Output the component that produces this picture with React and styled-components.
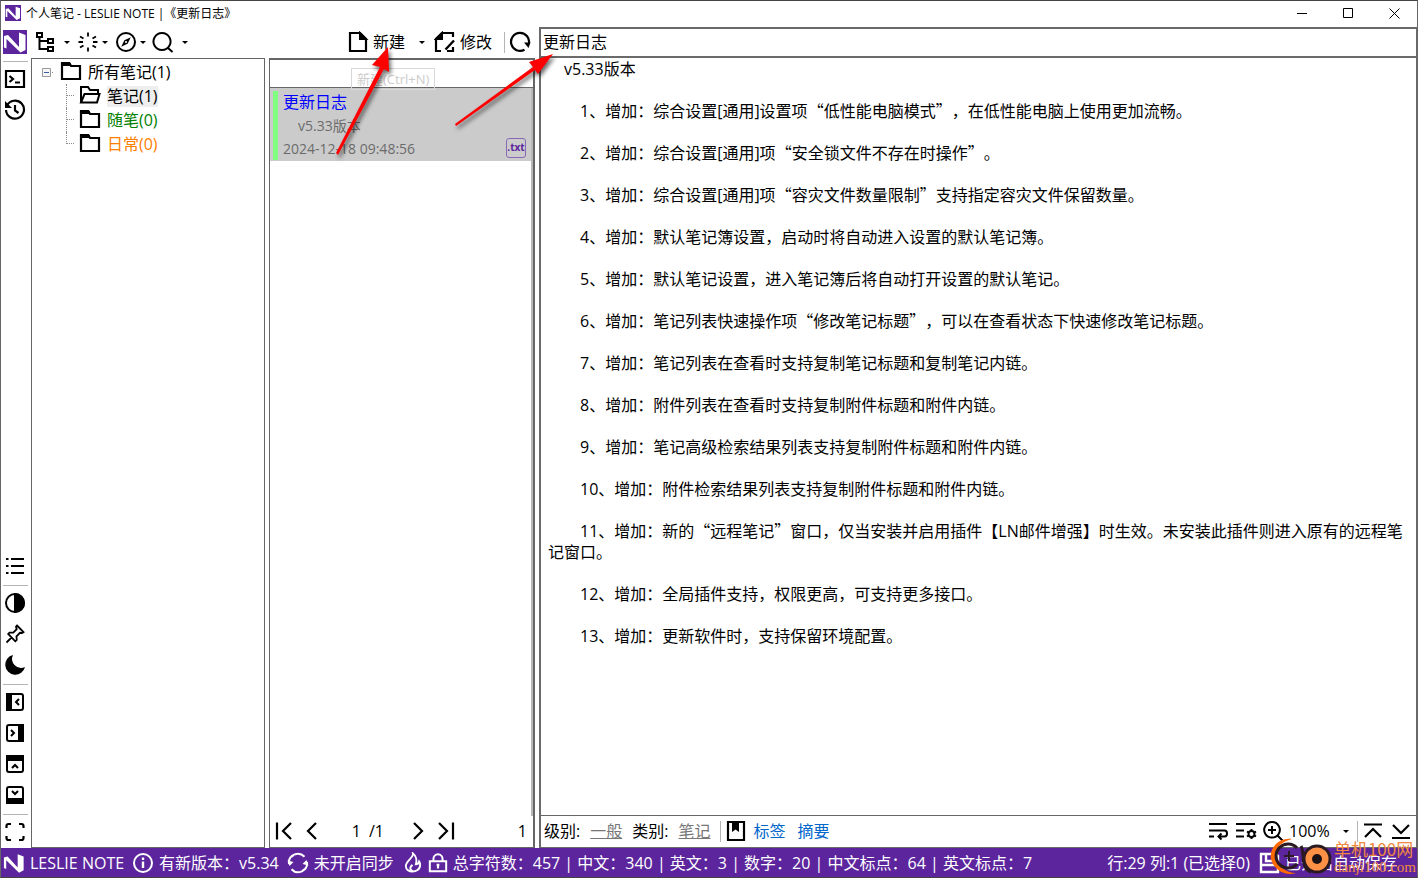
import { styled, createGlobalStyle } from "styled-components";

const GlobalStyle = createGlobalStyle`
  * {
    box-sizing: border-box;
  }
  body {
    margin: 0;
    background: #4a4a4c;
    color: #000;
    font: 16px/21px "Open Sans", "Noto Sans CJK SC", sans-serif;
    text-spacing-trim: space-all;
  }
  button, input, select {
    margin: 0;
    padding: 0;
    border: 0;
    background: none;
    color: inherit;
    font: inherit;
    border-radius: 0;
  }
  h1, p, ul {
    margin: 0;
    padding: 0;
    list-style: none;
  }
  svg {
    display: block;
    flex: none;
  }
`;

const Window = styled.div`
  position: relative;
  height: 100vh;
  display: flex;
  flex-direction: column;
  overflow: hidden;
  background: #fff;
  border: 1px solid #666;
  border-top-color: #444;
  border-bottom-color: #444;
`;

const Glyph = styled.svg`
  margin-bottom: 2px;
`;

const TitleBar = styled.header`
  height: 26px;
  flex: none;
  display: flex;
  align-items: center;
  padding: 0 0 2px 4px;
  gap: 5px;
  svg {
    margin: 0;
  }
`;

const WindowTitle = styled.h1`
  flex: 1;
  font-size: 12px;
  font-weight: 400;
  white-space: nowrap;
`;

const WindowButtons = styled.div`
  display: flex;
  align-self: stretch;
`;

const WindowButton = styled.button`
  width: 46px;
  display: grid;
  place-items: center;
`;

const Body = styled.div`
  flex: 1;
  min-height: 0;
  display: flex;
`;

const Sidebar = styled.nav`
  width: 30px;
  flex: none;
  display: flex;
  flex-direction: column;
  padding-right: 2px;
`;

const SideButton = styled.button`
  height: 31px;
  flex: none;
  display: grid;
  place-items: center;
`;

const SideLine = styled.div`
  height: 1px;
  flex: none;
  margin: 3px 1px 2px 2px;
  background: #b4b4b4;
`;

const Spacer = styled.div`
  flex: 1;
`;

const Browser = styled.section`
  width: 504px;
  flex: none;
  display: flex;
  flex-direction: column;
`;

const Toolbar = styled.div`
  height: 31px;
  flex: none;
  display: flex;
  align-items: center;
  padding: 0 4px 0 3px;
`;

const ToolButton = styled.button`
  display: flex;
  align-items: center;
  gap: ${(props) => props.$gap || 4}px;
  margin-right: ${(props) => props.$after || 0}px;
  white-space: nowrap;
`;

const Caret = styled.i`
  width: 0;
  border: 3px solid transparent;
  border-top-color: #000;
  border-bottom: 0;
`;

const Rule = styled.div`
  width: 1px;
  height: 21px;
  flex: none;
  margin-right: 4px;
  background: #b4b4b4;
`;

const Panes = styled.div`
  flex: 1;
  min-height: 0;
  display: flex;
  gap: 4px;
`;

const TreePane = styled.div`
  width: 234px;
  flex: none;
  border: 1px solid #666;
  padding: 1px 0 0 10px;
`;

const TreeRow = styled.div`
  height: 24px;
  display: flex;
  align-items: center;
  gap: 6px;
  color: ${(props) => props.$color || "#000"};
  ${Glyph} {
    color: #000;
  }
`;

const Branch = styled.ul`
  margin-left: 14px;
`;

const Twig = styled.li`
  display: flex;
  align-items: center;
  &::before {
    content: "";
    width: 8px;
    height: ${(props) => (props.$last ? 12 : 24)}px;
    align-self: flex-start;
    margin: 0 4px 0 10px;
    border-left: 1px dotted #888;
    background: repeating-linear-gradient(90deg, #888 0 1px, transparent 1px 2px)
      0 11px / 7px 1px no-repeat;
  }
`;

const TreeLabel = styled.span`
  background: ${(props) => (props.$active ? "#eee" : "none")};
`;

const ListPane = styled.div`
  flex: 1;
  display: flex;
  flex-direction: column;
  border: 1px solid #666;
  border-top-width: 2px;
  border-right-width: 2px;
`;

const Filter = styled.input`
  height: 28px;
  flex: none;
  width: 100%;
  padding: 0 6px;
  border-bottom: 1px solid #666;
  outline: none;
`;

const NoteList = styled.div`
  flex: 1;
  border-right: 2px solid #b8b8b8;
`;

const NoteCard = styled.article`
  display: grid;
  grid-template-columns: 5px 1fr auto;
  column-gap: 5px;
  padding: 3px 5px 1px 3px;
  background: #cbcbcb;
  font-size: 14px;
  color: #6b6b6b;
`;

const NoteMark = styled.div`
  background: #80ff80;
`;

const NoteTitle = styled.p`
  font-size: 16px;
  line-height: 23px;
  color: #00f;
`;

const NoteText = styled.p`
  line-height: 23px;
  padding-left: ${(props) => (props.$indent ? 15 : 0)}px;
`;

const FileBadge = styled.span`
  align-self: end;
  width: 20px;
  height: 20px;
  margin-bottom: 2px;
  border: 1px solid #8a68b8;
  border-radius: 3px;
  font-size: 10px;
  font-weight: 700;
  line-height: 17px;
  text-align: center;
  color: #5c259d;
`;

const Pager = styled.div`
  height: 31px;
  flex: none;
  display: flex;
  align-items: center;
  padding: 0 6px 0 3px;
`;

const PageInput = styled.input`
  width: 38px;
  text-align: right;
`;

const PageTotal = styled.span`
  width: 46px;
  padding-left: 8px;
`;

const Reader = styled.main`
  flex: 1;
  min-width: 0;
  margin-left: 4px;
  display: flex;
  flex-direction: column;
  border: 2px solid #6a6a6a;
  border-right-width: 1px;
  border-bottom-width: 1px;
`;

const TitleInput = styled.input`
  height: 29px;
  flex: none;
  width: 100%;
  padding: 0 2px 3px;
  border-bottom: 2px solid #6a6a6a;
  outline: none;
`;

const Article = styled.article`
  flex: 1;
  min-height: 0;
  overflow: hidden;
  padding: 1px 10px 0 7px;
`;

const Paragraph = styled.p`
  margin-bottom: 21px;
  text-indent: ${(props) => props.$indent}px;
`;

const Wide = styled.span`
  font-family: "Noto Sans CJK SC", sans-serif;
  line-height: 0;
`;

const ReaderFooter = styled.footer`
  height: 32px;
  flex: none;
  display: flex;
  align-items: center;
  padding: 0 4px 0 3px;
  border-top: 1px solid #666;
  white-space: nowrap;
`;

const FooterLink = styled.a`
  color: ${(props) => (props.$muted ? "#777" : "#0066cc")};
  text-decoration: ${(props) => (props.$muted ? "underline" : "none")};
  margin: 0 ${(props) => (props.$muted ? 10 : 6)}px;
`;

const ZoomSelect = styled.select`
  appearance: none;
  width: 54px;
  margin-left: 5px;
`;

const StatusBar = styled.footer`
  height: 29px;
  flex: none;
  display: flex;
  align-items: center;
  padding: 2px 20px 0 2px;
  gap: 5px;
  background: #5c259d;
  color: #fff;
  white-space: nowrap;
`;

const StatusItem = styled.span`
  display: flex;
  align-items: center;
  gap: 5px;
  margin-right: 3px;
`;

const Tooltip = styled.div`
  position: absolute;
  left: 350px;
  top: 67px;
  padding: 0 5px;
  border: 1px solid #d8d8d8;
  font-size: 13px;
  line-height: 20px;
  color: #ccc;
`;

const Pointers = styled.svg`
  position: absolute;
  left: 329px;
  top: 39px;
  filter: drop-shadow(2px 3px 2px rgba(0, 0, 0, 0.6));
`;

const Stamp = styled.div`
  position: absolute;
  right: 1px;
  bottom: 0;
  display: flex;
  align-items: center;
  gap: 2px;
  color: #f0893f;
`;

const StampText = styled.div`
  font: 17px/19px "Noto Sans CJK SC", sans-serif;
  white-space: nowrap;
`;

const StampUrl = styled.div`
  font: 15px/18px "Liberation Serif", serif;
`;

const shapes = {
  tree: (
    <>
      <path d="M3 2h5v4H3zM14 8h5v4h-5zM14 16h5v4h-5z" />
      <path d="M5.500 6v12H14M5.500 10H14" />
    </>
  ),
  spark: (
    <path
      strokeWidth="1.800"
      d="M11 1.500v4M11 16.500v4M1.500 11h4.500M16 11h4.500M3 5.500l3.500 2M15.500 14.500l3.500 2M19 5.500l-3.500 2M6.500 14.500l-3.500 2"
    />
  ),
  compass: (
    <>
      <circle cx="11" cy="11" r="9" />
      <path
        fill="currentColor"
        stroke="none"
        fillRule="evenodd"
        d="M15.800 6.200 12.600 12.700 6.200 15.800 9.400 9.300zM11 10a1 1 0 1 0 .01 0z"
      />
    </>
  ),
  search: <path d="M10 2a8.500 8.500 0 1 0 .01 0zM16 17l4.500 4" />,
  file: (
    <>
      <path strokeWidth="2.200" d="M13 2H3v18h16V8z" />
      <path fill="currentColor" d="M13 2v6h6z" />
    </>
  ),
  edit: (
    <>
      <path strokeWidth="2.200" d="M19 6V2H8L2 8v12h5M13 20h6v-4" />
      <path fill="currentColor" d="M8 2v6H2z" />
      <path d="M20 9.500 11.500 18.500" strokeWidth="2.400" />
    </>
  ),
  reload: (
    <>
      <path d="M15.500 18.700A9 9 0 1 1 19.800 13" strokeWidth="2.200" />
      <path d="M15 11.500h6.500l-2 5.500z" fill="currentColor" stroke="none" />
    </>
  ),
  terminal: (
    <path strokeWidth="2.200" d="M2 3h18v16H2zM5.500 8l3.500 3-3.500 3M11 14.500h5" />
  ),
  history: (
    <>
      <path strokeWidth="2.200" d="M3 6.500A9 9 0 1 1 2 11M11 6v5.500l3.500 2.500" />
      <path fill="currentColor" stroke="none" d="M1 2v7h7z" />
    </>
  ),
  list: (
    <path d="M7 4h13M7 11h13M7 18h13M2 4h2.500M2 11h2.500M2 18h2.500" />
  ),
  contrast: (
    <>
      <circle cx="11" cy="11" r="9" />
      <path fill="currentColor" d="M11 2a9 9 0 0 1 0 18z" />
    </>
  ),
  pin: (
    <path
      strokeWidth="1.800"
      d="M13 2.500 19.500 9l-1.500 1-2-.2-3.500 3.500.2 3.700-1.400 1.300L4.200 11l1.300-1.400 3.800.1 3.400-3.500-.7-2.500zM7.500 14.500 2.500 19.500"
    />
  ),
  moon: (
    <path
      fill="currentColor"
      stroke="none"
      d="M9 1a9 9 0 0 0 12 12A10 10 0 1 1 9 1z"
    />
  ),
  pane: (
    <>
      <rect x="3" y="3" width="16" height="16" rx="2" />
      <path fill="currentColor" d="M3 3h4v16H3z" />
      <path d="M15 8l-3 3 3 3" />
    </>
  ),
  fullscreen: (
    <path
      strokeWidth="2.200"
      d="M2.500 7V5q0-2 2-2H7M15 3h2.500q2 0 2 2v2M19.500 15v2q0 2-2 2H15M7 19H4.500q-2 0-2-2v-2"
    />
  ),
  folder: (
    <>
      <path strokeWidth="2.200" d="M2 3h7l2 3h9v13H2z" />
      <path fill="currentColor" stroke="none" d="M2 2h8l2 4H2z" />
    </>
  ),
  folderOpen: (
    <path d="M2 18.500V3h7l2 3h8v3.500M2 18.500 5.500 10H20.500L18 18.500z" />
  ),
  first: <path strokeWidth="2.200" d="M4 2.500v17M18 3l-8 8 8 8" />,
  prev: <path strokeWidth="2.200" d="M15 3l-8 8 8 8" />,
  next: <path strokeWidth="2.200" d="M7 3l8 8-8 8" />,
  last: <path strokeWidth="2.200" d="M4 3l8 8-8 8M18 2.500v17" />,
  bookmark: (
    <>
      <path strokeWidth="2.200" d="M3 2h16v18H3z" />
      <path
        fill="currentColor"
        stroke="none"
        d="M7 2h7v10l-3.500-2.500L7 12z"
      />
    </>
  ),
  wrap: (
    <path d="M2 4h18M2 10.500h15.500q2.500 0 2.500 3t-2.500 3H12M2 16.500h5M14.500 13.500l-3 3 3 3" />
  ),
  lineGear: (
    <>
      <path d="M1 4h19M1 10.500h8M1 16.500h8" />
      <circle cx="16.500" cy="14" r="3" />
      <path d="M16.500 9v2M16.500 17v2M12 11.500l2 1.200M19 15.300l2 1.200M21 11.500l-2 1.200M14 15.300l-2 1.200" />
    </>
  ),
  zoomIn: (
    <path d="M10 2a7.800 7.800 0 1 0 .01 0zM16 16l4.500 4.500M10 6v8M6 10h8" />
  ),
  toTop: <path strokeWidth="2.200" d="M2 4.500h18M3 17l8-8 8 8" />,
  toBottom: <path strokeWidth="2.200" d="M3 5l8 8 8-8M2 18h18" />,
  info: (
    <>
      <circle cx="11" cy="11" r="9" />
      <path strokeWidth="2.400" d="M11 9.500v6.500M11 5.500v2.500" />
    </>
  ),
  sync: (
    <>
      <path d="M2 12A9 9 0 0 1 17.500 4.700M20 10A9 9 0 0 1 4.500 17.300M4.500 4.800l2-1.500M17.500 17.200l-2 1.500" />
      <path
        fill="currentColor"
        stroke="none"
        d="M.5 8.500 2.500 14 6.500 10zM21.500 13.500 19.500 8 15.500 12z"
      />
    </>
  ),
  fire: (
    <path d="M11.500 1.500c1 4-7.500 8-7.500 13 0 4 3.500 6 7 6s8-2 8-7c0-2-1-3.500-1-3.500-.5 2-2 3-3.500 3 1.500-5-.5-9.500-3-11.500zM11 20c-4-2-2-5 0-6.500" />
  ),
  lock: (
    <>
      <path strokeWidth="2.200" d="M2 9h18v11H2zM6 9V6.500a5 5 0 0 1 10 0V9" />
      <path strokeWidth="2.400" d="M11 12v5M9.500 13h3" />
    </>
  ),
  save: (
    <>
      <path strokeWidth="2.400" d="M3 2h15l2 2v16H3z" />
      <path strokeWidth="2.400" d="M8 2v7h8V4M3 13h17" />
    </>
  ),
};

const Icon = ({ name, turn = 0, size = 22 }) => (
  <Glyph
    width={size}
    height={size}
    viewBox="0 0 22 22"
    fill="none"
    stroke="currentColor"
    strokeWidth="2"
    aria-hidden="true"
  >
    <g transform={`rotate(${turn} 11 11)`}>{shapes[name]}</g>
  </Glyph>
);

const Logo = ({ size, bare }) => (
  <Glyph width={size} height={size} viewBox="0 0 24 24" aria-hidden="true">
    {!bare && <path fill="#5c259d" d="M0 0h24v24H0z" />}
    <path
      fill="#fff"
      d="M1 6 5 5 16 17V2.500L22.500 5v15L17.500 22.500 3.500 9v9.500L1 17.500z"
    />
  </Glyph>
);

const folders = [
  { name: "笔记(1)", icon: "folderOpen", active: true },
  { name: "随笔(0)", icon: "folder", color: "#008000" },
  { name: "日常(0)", icon: "folder", color: "#ff8000" },
];

const changes = [
  "综合设置[通用]设置项“低性能电脑模式”，在低性能电脑上使用更加流畅。",
  "综合设置[通用]项“安全锁文件不存在时操作”。",
  "综合设置[通用]项“容灾文件数量限制”支持指定容灾文件保留数量。",
  "默认笔记簿设置，启动时将自动进入设置的默认笔记簿。",
  "默认笔记设置，进入笔记簿后将自动打开设置的默认笔记。",
  "笔记列表快速操作项“修改笔记标题”，可以在查看状态下快速修改笔记标题。",
  "笔记列表在查看时支持复制笔记标题和复制笔记内链。",
  "附件列表在查看时支持复制附件标题和附件内链。",
  "笔记高级检索结果列表支持复制附件标题和附件内链。",
  "附件检索结果列表支持复制附件标题和附件内链。",
  "新的“远程笔记”窗口，仅当安装并启用插件【LN邮件增强】时生效。未安装此插件则进入原有的远程笔记窗口。",
  "全局插件支持，权限更高，可支持更多接口。",
  "更新软件时，支持保留环境配置。",
];

// curly quotes have to take a full character cell
const withWideQuotes = (text) =>
  text
    .split(/([“”])/)
    .map((part, index) => (index % 2 ? <Wide key={index}>{part}</Wide> : part));

const SideBar = () => (
  <Sidebar>
    <SideButton aria-label="主页">
      <Logo size={24} />
    </SideButton>
    <SideLine />
    <SideButton aria-label="终端">
      <Icon name="terminal" />
    </SideButton>
    <SideButton aria-label="历史">
      <Icon name="history" />
    </SideButton>
    <Spacer />
    <SideButton aria-label="目录">
      <Icon name="list" />
    </SideButton>
    <SideLine />
    <SideButton aria-label="对比度">
      <Icon name="contrast" />
    </SideButton>
    <SideButton aria-label="置顶">
      <Icon name="pin" />
    </SideButton>
    <SideButton aria-label="夜间">
      <Icon name="moon" />
    </SideButton>
    <SideLine />
    {[0, 180, 90, 270].map((turn) => (
      <SideButton key={turn} aria-label="面板">
        <Icon name="pane" turn={turn} />
      </SideButton>
    ))}
    <SideLine />
    <SideButton aria-label="全屏">
      <Icon name="fullscreen" />
    </SideButton>
  </Sidebar>
);

const BrowserToolbar = () => (
  <Toolbar>
    <ToolButton $gap={8} $after={7} aria-label="分类">
      <Icon name="tree" />
      <Caret />
    </ToolButton>
    <ToolButton $gap={3} $after={7} aria-label="快捷">
      <Icon name="spark" />
      <Caret />
    </ToolButton>
    <ToolButton $gap={3} $after={6} aria-label="导航">
      <Icon name="compass" />
      <Caret />
    </ToolButton>
    <ToolButton $gap={8} aria-label="搜索">
      <Icon name="search" />
      <Caret />
    </ToolButton>
    <Spacer />
    <ToolButton $after={14}>
      <Icon name="file" />
      新建
    </ToolButton>
    <ToolButton $after={9} aria-label="更多新建">
      <Caret />
    </ToolButton>
    <ToolButton $after={12}>
      <Icon name="edit" />
      修改
    </ToolButton>
    <Rule />
    <ToolButton aria-label="刷新">
      <Icon name="reload" />
    </ToolButton>
  </Toolbar>
);

const FolderTree = () => (
  <TreePane>
    <TreeRow>
      <svg width="12" height="11" viewBox="0 0 12 11">
        <path d="M.5 1.500h8v8h-8z" fill="#f6f6f6" stroke="#999" />
        <path d="M2 5.500h5" stroke="#3c5ca8" />
        <path d="M10 5.500h1" stroke="#888" />
      </svg>
      <Icon name="folder" />
      <TreeLabel>所有笔记(1)</TreeLabel>
    </TreeRow>
    <Branch>
      {folders.map((folder, index) => (
        <Twig key={folder.name} $last={index === folders.length - 1}>
          <TreeRow $color={folder.color}>
            <Icon name={folder.icon} />
            <TreeLabel $active={folder.active}>{folder.name}</TreeLabel>
          </TreeRow>
        </Twig>
      ))}
    </Branch>
  </TreePane>
);

const Notes = () => (
  <ListPane>
    <Filter aria-label="筛选" />
    <NoteList>
      <NoteCard>
        <NoteMark />
        <div>
          <NoteTitle>更新日志</NoteTitle>
          <NoteText $indent>v5.33版本</NoteText>
          <NoteText>2024-12-18 09:48:56</NoteText>
        </div>
        <FileBadge>.txt</FileBadge>
      </NoteCard>
    </NoteList>
    <Pager>
      <ToolButton $after={6} aria-label="首页">
        <Icon name="first" />
      </ToolButton>
      <ToolButton aria-label="上一页">
        <Icon name="prev" />
      </ToolButton>
      <PageInput aria-label="页码" defaultValue="1" />
      <PageTotal>/1</PageTotal>
      <ToolButton $after={6} aria-label="下一页">
        <Icon name="next" />
      </ToolButton>
      <ToolButton aria-label="末页">
        <Icon name="last" />
      </ToolButton>
      <Spacer />
      <span>1</span>
    </Pager>
  </ListPane>
);

const NoteReader = () => (
  <Reader>
    <TitleInput aria-label="标题" defaultValue="更新日志" />
    <Article>
      <Paragraph $indent={16}>v5.33版本</Paragraph>
      {changes.map((change, index) => (
        <Paragraph key={change} $indent={32}>
          {withWideQuotes(`${index + 1}、增加：${change}`)}
        </Paragraph>
      ))}
    </Article>
    <ReaderFooter>
      级别:
      <FooterLink $muted href="#level">
        一般
      </FooterLink>
      类别:
      <FooterLink $muted href="#category">
        笔记
      </FooterLink>
      <Rule />
      <ToolButton aria-label="书签">
        <Icon name="bookmark" />
      </ToolButton>
      <FooterLink href="#tags">标签</FooterLink>
      <FooterLink href="#summary">摘要</FooterLink>
      <Spacer />
      <ToolButton $after={6} aria-label="自动换行">
        <Icon name="wrap" />
      </ToolButton>
      <ToolButton $after={5} aria-label="行设置">
        <Icon name="lineGear" />
      </ToolButton>
      <ToolButton aria-label="放大">
        <Icon name="zoomIn" />
      </ToolButton>
      <ZoomSelect aria-label="缩放" defaultValue="100%">
        <option>100%</option>
      </ZoomSelect>
      <ToolButton $after={8} aria-label="缩放选项">
        <Caret />
      </ToolButton>
      <Rule />
      <ToolButton $after={6} aria-label="到顶部">
        <Icon name="toTop" />
      </ToolButton>
      <ToolButton aria-label="到底部">
        <Icon name="toBottom" />
      </ToolButton>
    </ReaderFooter>
  </Reader>
);

const Status = () => (
  <StatusBar>
    <StatusItem>
      <Logo size={22} bare />
      LESLIE NOTE
    </StatusItem>
    <StatusItem>
      <Icon name="info" />
      有新版本：v5.34
    </StatusItem>
    <StatusItem>
      <Icon name="sync" />
      未开启同步
    </StatusItem>
    <Icon name="fire" size={21} />
    <Icon name="lock" size={20} />
    <span>
      总字符数：457 | 中文：340 | 英文：3 | 数字：20 | 中文标点：64 | 英文标点：7
    </span>
    <Spacer />
    <StatusItem>行:29 列:1 (已选择0)</StatusItem>
    <Icon name="save" />
    <span>已开启自动保存</span>
  </StatusBar>
);

const Watermark = () => (
  <Stamp>
    <svg width="64" height="40" viewBox="0 0 64 40" fill="none">
      <path
        d="M24 2C10 0 1 12 3 22s14 18 25 14C18 36 9 29 8 20S13 5 24 2z"
        fill="#ff6a00"
      />
      <path d="M29 11A12 12 0 1 0 29 27" stroke="#2b1a22" strokeWidth="3" />
      <path d="M21 14v10M16 19h10" stroke="#2b1a22" strokeWidth="2" />
      <path d="M33 9c4 7-1 22 10 26" stroke="#2b1a22" strokeWidth="3" />
      <circle
        cx="49"
        cy="22"
        r="13"
        fill="#ff9147"
        stroke="#2b1a22"
        strokeWidth="3"
      />
      <circle cx="49" cy="22" r="5" fill="#1c1216" />
    </svg>
    <div>
      <StampText>单机100网</StampText>
      <StampUrl>danji100.com</StampUrl>
    </div>
  </Stamp>
);

const App = () => {
  return (
    <>
      <GlobalStyle />
      <Window>
        <TitleBar>
          <Logo size={16} />
          <WindowTitle>个人笔记 - LESLIE NOTE |《更新日志》</WindowTitle>
          <WindowButtons>
            <WindowButton aria-label="最小化">
              <svg width="11" height="11" stroke="#000" fill="none">
                <path d="M0 5.500h10" />
              </svg>
            </WindowButton>
            <WindowButton aria-label="最大化">
              <svg width="11" height="11" stroke="#000" fill="none">
                <path d="M.5.500h9v9h-9z" />
              </svg>
            </WindowButton>
            <WindowButton aria-label="关闭">
              <svg width="11" height="11" stroke="#000" fill="none">
                <path d="M.5.500l10 10M10.500.500l-10 10" />
              </svg>
            </WindowButton>
          </WindowButtons>
        </TitleBar>
        <Body>
          <SideBar />
          <Browser>
            <BrowserToolbar />
            <Panes>
              <FolderTree />
              <Notes />
            </Panes>
          </Browser>
          <NoteReader />
        </Body>
        <Status />
        <Tooltip role="tooltip">新建(Ctrl+N)</Tooltip>
        <Pointers width="232" height="124" viewBox="0 0 232 124" fill="#f00">
          <path d="M58 7 42 25l8 2L6 113l2 2L54 29l5 3z" />
          <path d="M223 14 199 22l4 5L125 84l1 2L205 30l3 4z" />
        </Pointers>
        <Watermark />
      </Window>
    </>
  );
};

export default App;
